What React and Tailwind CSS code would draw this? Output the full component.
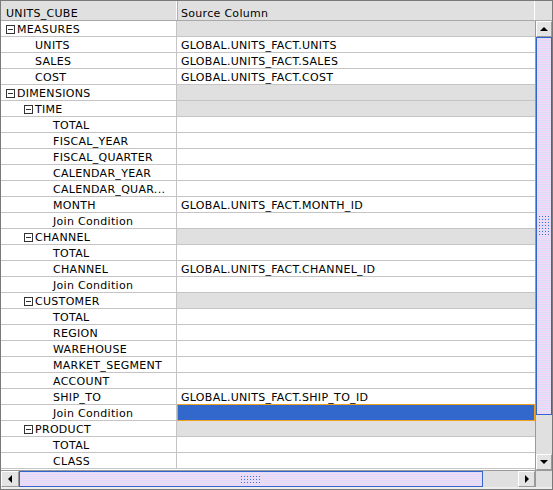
import React from 'react';

const rows = [
  { label: 'MEASURES', level: 0, group: true },
  { label: 'UNITS', level: 1, src: 'GLOBAL.UNITS_FACT.UNITS' },
  { label: 'SALES', level: 1, src: 'GLOBAL.UNITS_FACT.SALES' },
  { label: 'COST', level: 1, src: 'GLOBAL.UNITS_FACT.COST' },
  { label: 'DIMENSIONS', level: 0, group: true },
  { label: 'TIME', level: 1, group: true },
  { label: 'TOTAL', level: 2 },
  { label: 'FISCAL_YEAR', level: 2 },
  { label: 'FISCAL_QUARTER', level: 2 },
  { label: 'CALENDAR_YEAR', level: 2 },
  { label: 'CALENDAR_QUAR...', level: 2 },
  { label: 'MONTH', level: 2, src: 'GLOBAL.UNITS_FACT.MONTH_ID' },
  { label: 'Join Condition', level: 2 },
  { label: 'CHANNEL', level: 1, group: true },
  { label: 'TOTAL', level: 2 },
  { label: 'CHANNEL', level: 2, src: 'GLOBAL.UNITS_FACT.CHANNEL_ID' },
  { label: 'Join Condition', level: 2 },
  { label: 'CUSTOMER', level: 1, group: true },
  { label: 'TOTAL', level: 2 },
  { label: 'REGION', level: 2 },
  { label: 'WAREHOUSE', level: 2 },
  { label: 'MARKET_SEGMENT', level: 2 },
  { label: 'ACCOUNT', level: 2 },
  { label: 'SHIP_TO', level: 2, src: 'GLOBAL.UNITS_FACT.SHIP_TO_ID' },
  { label: 'Join Condition', level: 2, selected: true },
  { label: 'PRODUCT', level: 1, group: true },
  { label: 'TOTAL', level: 2 },
  { label: 'CLASS', level: 2 },
];

// indentation per tree level
const groupPad = { 0: 'pl-[5px]', 1: 'pl-[23px]' };
const leafPad = { 1: 'pl-[34px]', 2: 'pl-[52px]' };

const thumbBg =
  'bg-[repeating-linear-gradient(0deg,#f3d9f3_0px,#f3d9f3_1px,#dcdcfb_1px,#dcdcfb_2px)]';
const grip =
  'bg-[radial-gradient(#3a6fd8_0.8px,transparent_1px)] [background-size:3px_3px]';
const btn =
  'bg-[#e4e4e4] border-t border-l border-t-white border-l-white border-b border-r border-b-[#9a9a9a] border-r-[#9a9a9a] flex items-center justify-center';

const Expander = () => (
  <span className="w-[9px] h-[9px] border border-[#333] flex items-center justify-center shrink-0 mr-[2px] bg-white">
    <span className="w-[5px] h-px bg-[#333]" />
  </span>
);

const Row = ({ row }) => (
  <div className="flex h-[16px] border-b border-[#c4c4c4]">
    <div
      className={`w-[176px] shrink-0 border-r border-[#c4c4c4] flex items-center pt-px ${
        row.group ? groupPad[row.level] : leafPad[row.level]
      }`}
    >
      {row.group && <Expander />}
      <span className="leading-none whitespace-nowrap">{row.label}</span>
    </div>
    <div
      className={`flex-1 flex items-center pl-[4px] pt-px ${
        row.group ? 'bg-[#e0e0e0]' : ''
      } ${row.selected ? 'bg-[#3267cc] border border-[#f0a020] -mt-px h-[17px]' : ''}`}
    >
      {row.src && <span className="leading-none whitespace-nowrap">{row.src}</span>}
    </div>
  </div>
);

export default function App() {
  return (
    <div className="w-[553px] h-[490px] border border-[#7a7a7a] bg-[#eeeeee] flex flex-col font-['DejaVu_Sans',sans-serif] text-[11px] tracking-[0.3px] text-black overflow-hidden">
      {/* header */}
      <div className="flex h-[20px] shrink-0 bg-[#e0e0e0] border-b border-[#a8a8a8]">
        <div className="w-[176px] shrink-0 border-r border-r-white flex items-end pb-[1px] pl-[5px] leading-none">
          UNITS_CUBE
        </div>
        <div className="w-[358px] shrink-0 border-l border-l-[#b0b0b0] border-r border-r-white flex items-end pb-[1px] pl-[3px] leading-none">
          Source Column
        </div>
        <div className="flex-1" />
      </div>

      {/* body */}
      <div className="flex h-[449px] shrink-0">
        <div className="w-[534px] shrink-0 bg-white overflow-hidden">
          {rows.map((r, i) => (
            <Row key={i} row={r} />
          ))}
        </div>
        <div className="w-[17px] shrink-0 flex flex-col bg-[#e0e0e0] border-l border-[#9a9a9a]">
          <div className={`${btn} h-[16px] shrink-0`}>
            <span className="w-0 h-0 border-x-[4px] border-x-transparent border-b-[4px] border-b-black" />
          </div>
          <div className={`h-[378px] shrink-0 border border-[#3366cc] ${thumbBg} flex items-center justify-center`}>
            <div className={`w-[12px] h-[22px] ${grip}`} />
          </div>
          <div className="flex-1" />
          <div className={`${btn} h-[16px] shrink-0`}>
            <span className="w-0 h-0 border-x-[4px] border-x-transparent border-t-[4px] border-t-black" />
          </div>
        </div>
      </div>

      {/* horizontal scrollbar */}
      <div className="flex h-[17px] shrink-0 border-t border-[#9a9a9a]">
        <div className={`${btn} w-[18px] shrink-0`}>
          <span className="w-0 h-0 border-y-[4px] border-y-transparent border-r-[4px] border-r-black" />
        </div>
        <div className={`w-[464px] shrink-0 border border-[#3366cc] ${thumbBg} flex items-center justify-center`}>
          <div className={`w-[22px] h-[9px] ${grip}`} />
        </div>
        <div className="w-[35px] shrink-0 bg-[#e0e0e0]" />
        <div className={`${btn} w-[17px] shrink-0`}>
          <span className="w-0 h-0 border-y-[4px] border-y-transparent border-l-[4px] border-l-black" />
        </div>
        <div className="flex-1 bg-[#e0e0e0] border-l border-[#9a9a9a]" />
      </div>
      <div className="flex-1 bg-[#eeeeee]" />
    </div>
  );
}
